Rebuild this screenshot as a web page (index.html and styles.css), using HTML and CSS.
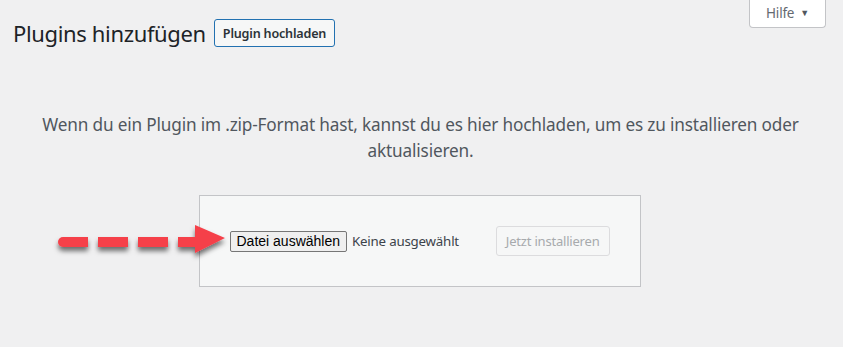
FILE: index.html
```html
<!DOCTYPE html>
<html lang="de">
<head>
  <meta charset="UTF-8">
  <meta name="viewport" content="width=device-width, initial-scale=1.0">
  <title>Plugins hinzufügen</title>
  <link rel="stylesheet" href="styles.css">
</head>
<body>
  <div class="screen-meta">
    <button class="help-toggle">Hilfe <span class="caret">▼</span></button>
  </div>

  <div class="wrap">
    <div class="page-head">
      <h1 class="page-title">Plugins hinzufügen</h1>
      <a class="title-action" href="#">Plugin hochladen</a>
    </div>

    <div class="upload-plugin">
      <p class="install-help">Wenn du ein Plugin im .zip-Format hast, kannst du es hier hochladen, um es zu installieren oder aktualisieren.</p>
      <form class="upload-form">
        <div class="file-field">
          <button type="button" class="file-button">Datei auswählen</button>
          <span class="file-name">Keine ausgewählt</span>
        </div>
        <button type="submit" class="install-button" disabled>Jetzt installieren</button>
      </form>
    </div>
  </div>

  <!-- Markierungspfeil -->
  <svg class="hint-arrow" width="180" height="40" viewBox="0 0 180 40">
    <defs>
      <filter id="shadow" x="-10%" y="-30%" width="120%" height="180%">
        <feDropShadow dx="0" dy="4" stdDeviation="2.5" flood-color="#000" flood-opacity="0.55"/>
      </filter>
    </defs>
    <g filter="url(#shadow)" fill="#f5404a">
      <path d="M13 12 H38 V22 H13 A5 5 0 0 1 13 12 Z"/>
      <rect x="48" y="12" width="30" height="10"/>
      <rect x="88" y="12" width="30" height="10"/>
      <rect x="128" y="12" width="19" height="10"/>
      <polygon points="145,0 175,13 145,28"/>
    </g>
  </svg>
</body>
</html>
```

FILE: styles.css
```css
body {
  margin: 0;
  background: #f0f0f1;
  color: #3c434a;
  font-family: "Noto Sans", "Open Sans", sans-serif;
  font-size: 13px;
  position: relative;
}

.screen-meta {
  float: right;
  margin-right: 17px;
}

.help-toggle {
  display: flex;
  align-items: center;
  gap: 6px;
  height: 28px;
  padding: 0 16px 2px 16px;
  background: #fff;
  border: 1px solid #c3c4c7;
  border-top: none;
  border-radius: 0 0 4px 4px;
  color: #646970;
  font-family: inherit;
  font-size: 13.5px;
  letter-spacing: -0.2px;
}

.caret {
  font-size: 9px;
  color: #50575e;
}

.wrap {
  padding: 19px 15px 0 13px;
}

.page-head {
  display: flex;
  align-items: center;
  gap: 8px;
}

.page-title {
  margin: 0;
  font-size: 22px;
  font-weight: 400;
  line-height: 28px;
  color: #1d2327;
  letter-spacing: -0.35px;
}

.title-action {
  display: inline-flex;
  align-items: center;
  height: 26px;
  padding: 0 8px;
  border: 1px solid #2271b1;
  border-radius: 3px;
  background: #f6f7f7;
  color: #2c3338;
  font-size: 12.6px;
  font-weight: 600;
  text-decoration: none;
  letter-spacing: -0.2px;
}

.upload-plugin {
  text-align: center;
  padding-top: 65px;
}

.install-help {
  margin: 0 auto;
  color: #50575e;
  font-size: 17.2px;
  line-height: 26px;
  letter-spacing: -0.16px;
}

.upload-form {
  display: inline-flex;
  justify-content: space-between;
  align-items: center;
  box-sizing: border-box;
  width: 442px;
  margin: 31px 2px 0 0;
  padding: 30px;
  background: #f6f7f7;
  border: 1px solid #c3c4c7;
  text-align: left;
}

.file-field {
  display: flex;
  align-items: center;
  gap: 5px;
}

.file-button {
  height: 21px;
  padding: 0 6px;
  background: #efefef;
  border: 1px solid #767676;
  border-radius: 2px;
  color: #000;
  font-family: "Liberation Sans", Arial, sans-serif;
  font-size: 14px;
}

.file-name {
  color: #3c434a;
  font-size: 13.3px;
  letter-spacing: -0.2px;
}

.install-button {
  height: 30px;
  padding: 0 9px;
  background: #f6f7f7;
  border: 1px solid #dcdcde;
  border-radius: 3px;
  color: #a7aaad;
  font-family: inherit;
  font-size: 13px;
  letter-spacing: -0.2px;
}

.hint-arrow {
  position: absolute;
  left: 50px;
  top: 225px;
  overflow: visible;
}
```
